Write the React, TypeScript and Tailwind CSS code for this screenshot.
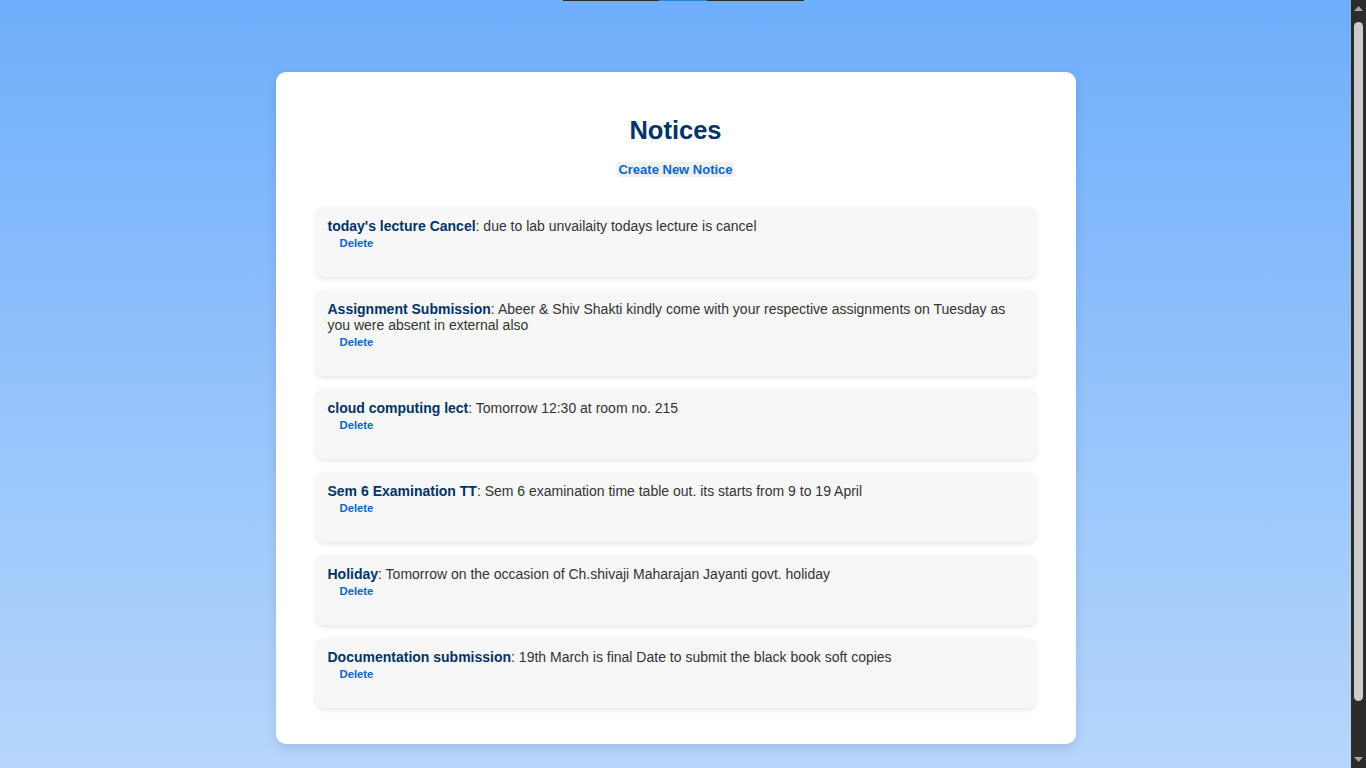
const notices = [
  { id: 1, title: "today's lecture Cancel", body: 'due to lab unvailaity todays lecture is cancel' },
  {
    id: 2,
    title: 'Assignment Submission',
    body: 'Abeer & Shiv Shakti kindly come with your respective assignments on Tuesday as you were absent in external also',
  },
  { id: 3, title: 'cloud computing lect', body: 'Tomorrow 12:30 at room no. 215' },
  { id: 4, title: 'Sem 6 Examination TT', body: 'Sem 6 examination time table out. its starts from 9 to 19 April' },
  { id: 5, title: 'Holiday', body: 'Tomorrow on the occasion of Ch.shivaji Maharajan Jayanti govt. holiday' },
  { id: 6, title: 'Documentation submission', body: '19th March is final Date to submit the black book soft copies' },
];

function NoticeItem({ title, body }: { title: string; body: string }) {
  return (
    <li className="bg-[#f7f7f7] rounded-lg shadow-[0_2px_5px_rgba(0,0,0,0.1)] pl-3 pr-4 pt-[11px] pb-[25px]">
      <p className="text-[14px] leading-4 text-[#333]">
        <strong className="text-[#003366]">{title}</strong>: {body}
      </p>
      <button className="block h-[18px] px-3 text-[11.3px] font-bold leading-[18px] text-[#0a66c8]">Delete</button>
    </li>
  );
}

// browser scrollbar as it shows in the capture
function Scrollbar() {
  return (
    <div className="flex w-[15px] shrink-0 flex-col bg-[#2c2c2c]">
      <div className="flex h-[17px] items-center justify-center">
        <svg width="9" height="5" viewBox="0 0 9 5">
          <path d="M4.5 0 L9 5 L0 5 Z" fill="#a3a3a3" />
        </svg>
      </div>
      <div className="flex-1 pt-[5px]">
        <div className="mx-auto h-[679px] w-[9px] rounded-full bg-[#cdcdcd]" />
      </div>
      <div className="flex h-[17px] items-center justify-center">
        <svg width="9" height="5" viewBox="0 0 9 5">
          <path d="M0 0 L9 0 L4.5 5 Z" fill="#a3a3a3" />
        </svg>
      </div>
    </div>
  );
}

export default function App() {
  return (
    <div className="flex h-screen overflow-hidden font-['Liberation_Sans',Arial,sans-serif]">
      <div className="flex-1 overflow-hidden">
        <div className="bg-gradient-to-b from-[#6eaefb] to-[#bcd9fb] pb-[87px]">
          {/* tab underline from the nav scrolled out of view */}
          <div className="flex justify-center pl-4">
            <div className="h-px w-[96px] bg-[#2b2b2b]" />
            <div className="h-px w-[48px] bg-[#2a84d6]" />
            <div className="h-px w-[97px] bg-[#2b2b2b]" />
          </div>

          <main className="mx-auto mt-[71px] w-[800px] rounded-[10px] bg-white px-10 pt-[44px] pb-[36px] shadow-[0_4px_12px_rgba(0,0,0,0.1)]">
            <h2 className="text-center text-[25.5px] font-bold leading-[29px] text-[#003366]">Notices</h2>
            <div className="mt-[17px] flex justify-center">
              <button className="rounded-[3px] bg-[#f0f0f0] px-px text-[13px] font-bold leading-[15px] text-[#0a66c8]">
                Create New Notice
              </button>
            </div>

            <ul className="mt-[30px] flex flex-col gap-[13px]">
              {notices.map((n) => (
                <NoticeItem key={n.id} title={n.title} body={n.body} />
              ))}
            </ul>
          </main>
        </div>
      </div>
      <Scrollbar />
    </div>
  );
}
